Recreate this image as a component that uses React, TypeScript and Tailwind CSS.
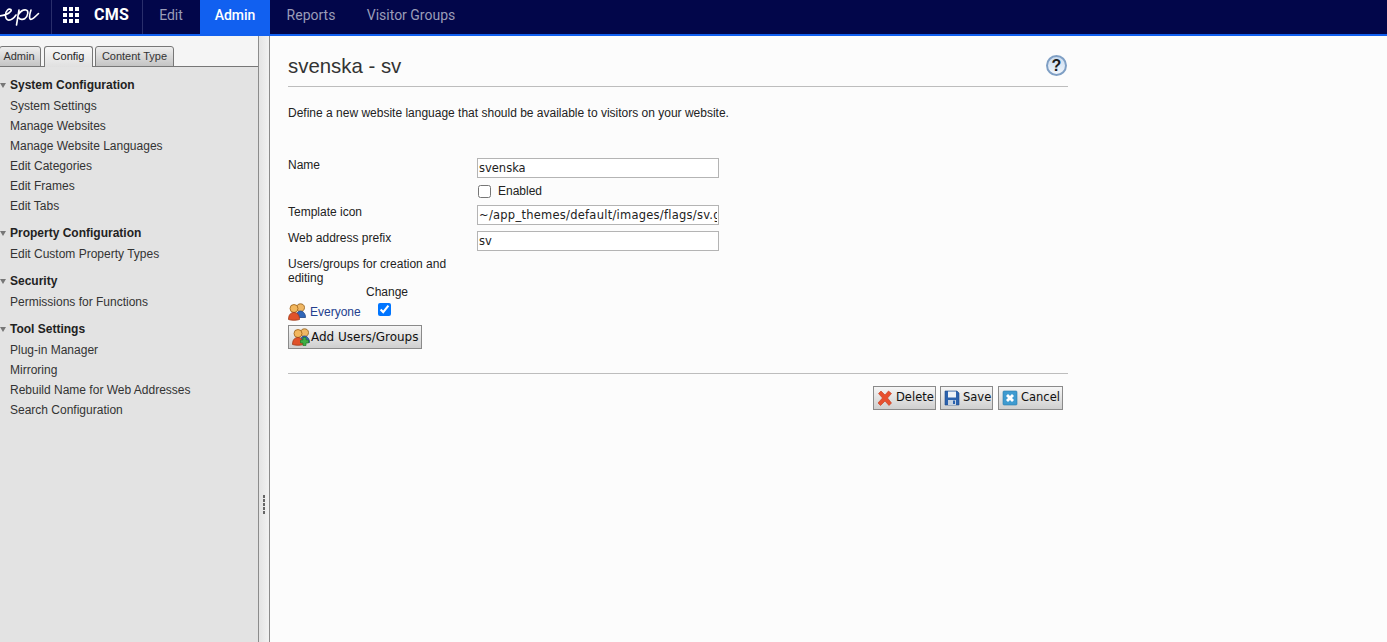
const arial = 'font-["Liberation_Sans",Arial,sans-serif]';

function EpiLogo() {
  return (
    <svg width="42" height="34" viewBox="0 0 42 34" fill="none" stroke="white" strokeWidth="1.6" strokeLinecap="round" strokeLinejoin="round">
      <path d="M-2 16C3 16 9 14 11 11C12 9 9 8.500 7.500 10C4.500 13 5 19 8 20C11 20.500 14 18 16 15" />
      <path d="M19 10L16.500 25M18 15C20 12 23 9.500 26 10C29 10.500 28 16 25 18.500C23 20 20 19.500 19 18" />
      <path d="M31 10C30 13 29 17 30 19C31.500 20.500 35 17 38.500 13.500" />
    </svg>
  );
}

function Grid() {
  return (
    <div className="grid grid-cols-3 gap-[2px] w-[16px] h-[16px]">
      {Array.from({ length: 9 }).map((_, i) => (
        <div key={i} className="bg-white w-[4px] h-[4px]" />
      ))}
    </div>
  );
}

function UsersIcon({ plus }: { plus?: boolean }) {
  return (
    <svg width="18" height="18" viewBox="0 0 18 18">
      <path d="M8.500 4.500C8.500 2 10.500.8 12.500.8s4 1.200 4 3.700-1.800 4.200-4 4.200-4-1.700-4-4.200z" fill="#efb765" stroke="#8f5c16" strokeWidth="0.8" />
      <path d="M8 14.500c0-4 2-6.500 4.500-6.500s5 2.500 5 6.500z" fill="#2f66b8" stroke="#1f4585" strokeWidth="0.8" />
      <circle cx="6" cy="5.500" r="4" fill="#f2b75e" stroke="#9a5f16" strokeWidth="0.8" />
      <path d="M.5 16.500c0-5 2.500-7 5.500-7s5.500 2 5.500 7c-3 1-8 1-11 0z" fill="#e0522a" stroke="#a03a18" strokeWidth="0.8" />
      {plus && <path d="M11 9.500h3v2.500h2.500v3H14v2.500h-3V15H8.500v-3H11z" fill="#3fae45" stroke="#1f7a28" strokeWidth="0.7" />}
    </svg>
  );
}

function DeleteIcon() {
  return (
    <svg width="16" height="16" viewBox="0 0 16 16">
      <path d="M1.500 3.500L4 1l4 4 3.500-4L14.500 3.500 10.500 8l4 5-2.500 2.500-4-4.500-4.500 4.500L1 13l4.500-5z" fill="#e8502f" stroke="#c23a1c" strokeWidth="0.6" />
    </svg>
  );
}

function SaveIcon() {
  return (
    <svg width="16" height="16" viewBox="0 0 16 16">
      <path d="M1 1h12l2 2v12H1z" fill="#2c62ad" stroke="#1f4a8a" strokeWidth="0.6" />
      <rect x="4" y="1.500" width="8" height="6" fill="#eef2f7" />
      <rect x="4" y="10" width="8" height="5" fill="#c8d3e0" />
      <rect x="9" y="10.500" width="2" height="3.500" fill="#2c62ad" />
    </svg>
  );
}

function CancelIcon() {
  return (
    <svg width="16" height="16" viewBox="0 0 16 16">
      <rect x="1" y="1" width="14" height="14" rx="1" fill="#3f9bd0" stroke="#2a7cab" strokeWidth="0.6" />
      <path d="M4 6l2-2 2 2 2-2 2 2-2 2 2 2-2 2-2-2-2 2-2-2 2-2z" fill="white" />
    </svg>
  );
}

function HelpIcon() {
  return (
    <div className="w-[21px] h-[21px] rounded-full border-2 border-[#7f9fc4] bg-gradient-to-b from-[#c9dbef] to-[#f2f6fb] flex items-center justify-center text-[16px] font-bold text-[#1a1a1a] font-['Liberation_Sans',sans-serif]">
      ?
    </div>
  );
}

function Section({ title, items }: { title: string; items: string[] }) {
  return (
    <div className="mb-[7px]">
      <div className="relative h-[21px] flex items-center pb-[1px] pl-[10px] text-[12px] font-bold text-[#222]">
        <span className="absolute left-0 top-[8px] w-0 h-0 border-l-[3px] border-r-[3px] border-t-[5px] border-l-transparent border-r-transparent border-t-[#777]" />
        {title}
      </div>
      {items.map((item) => (
        <div key={item} className="h-[20px] flex items-center pl-[10px] text-[12px] text-[#333]">
          {item}
        </div>
      ))}
    </div>
  );
}

function ActionButton({ icon, label, className }: { icon: React.ReactNode; label: string; className: string }) {
  return (
    <button type="button" className={`h-[24px] flex items-center pl-[3px] border border-[#8a8a8a] bg-gradient-to-b from-[#f6f6f6] to-[#cfcfcf] text-[#111] font-['DejaVu_Sans',sans-serif] ${className}`}>
      {icon}
      {label}
    </button>
  );
}

function Row({ label, children, className }: { label: string; children?: React.ReactNode; className: string }) {
  return (
    <div className={`flex ${className}`}>
      <div className="w-[189px] shrink-0 text-[12px] leading-[14px] text-[#222]">{label}</div>
      {children}
    </div>
  );
}

const inputCls = "w-[242px] h-[20px] border border-[#b4b4b4] bg-white px-[1px] text-[11.500px] text-[#222] font-['DejaVu_Sans',sans-serif] outline-none";
const navCls = "flex items-center justify-center pb-[3px] text-[14px] font-['Roboto',sans-serif]";

export default function App() {
  return (
    <div className={`h-[642px] w-[1387px] overflow-hidden flex flex-col bg-[#fcfcfc] ${arial}`}>
      <header className="h-[36px] shrink-0 bg-[#02064a] border-b-2 border-[#1160f0] flex">
        <div className="w-[52px] border-r border-[#2a2e6b] overflow-hidden">
          <EpiLogo />
        </div>
        <div className="w-[91px] border-r border-[#2a2e6b] flex items-center pb-[4px] pl-[11px] gap-[15px]">
          <Grid />
          <span className="text-[16px] font-bold text-white font-['Roboto',sans-serif] tracking-[0.3px]">CMS</span>
        </div>
        <div className={`w-[56px] text-[#9a9cb8] ${navCls}`}>Edit</div>
        <div className={`w-[70px] ml-[1px] font-medium text-white bg-[#1160f0] ${navCls}`}>Admin</div>
        <div className={`w-[80px] ml-[1px] text-[#9a9cb8] ${navCls}`}>Reports</div>
        <div className={`ml-[2px] w-[116px] text-[#9a9cb8] text-[13.800px] ${navCls}`}>Visitor Groups</div>
      </header>
      <div className="flex flex-1 min-h-0">
        <aside className="w-[258px] shrink-0 bg-[#e3e3e3] flex flex-col">
          <div className="h-[31px] shrink-0 bg-[#f5f5f5] border-b border-[#777] flex items-end">
            <div className="w-[42px] h-[21px] -mb-[1px] ml-[-1px] pb-[1px] pr-[2px] border border-[#777] rounded-t-[3px] bg-gradient-to-b from-[#eee] to-[#c4c4c4] flex items-center justify-center text-[11px] text-[#333]">Admin</div>
            <div className="w-[49px] h-[21px] ml-[3px] -mb-[1px] pb-[1px] border border-b-0 border-[#777] rounded-t-[3px] bg-gradient-to-b from-[#f8f8f8] to-[#e0e0e0] flex items-center justify-center text-[11px] text-[#222]">Config</div>
            <div className="w-[79px] h-[21px] ml-[2px] -mb-[1px] pb-[1px] border border-[#777] rounded-t-[3px] bg-gradient-to-b from-[#eee] to-[#c4c4c4] flex items-center justify-center text-[11px] text-[#333]">Content Type</div>
          </div>
          <nav className="pt-[8px]">
            <Section title="System Configuration" items={["System Settings", "Manage Websites", "Manage Website Languages", "Edit Categories", "Edit Frames", "Edit Tabs"]} />
            <Section title="Property Configuration" items={["Edit Custom Property Types"]} />
            <Section title="Security" items={["Permissions for Functions"]} />
            <Section title="Tool Settings" items={["Plug-in Manager", "Mirroring", "Rebuild Name for Web Addresses", "Search Configuration"]} />
          </nav>
        </aside>
        <div className="w-[12px] shrink-0 border-x border-[#8c8c8c] bg-gradient-to-r from-[#e4e4e4] to-[#f2f2f2] flex flex-col items-center gap-[1px] pt-[459px]">
          {Array.from({ length: 5 }).map((_, i) => (
            <div key={i} className="w-[2px] h-[3px] bg-[#666]" />
          ))}
        </div>
        <main className="flex-1 pl-[18px] pt-[16px]">
          <div className="w-[780px]">
            <div className="h-[35px] border-b border-[#bdbdbd] flex items-start justify-between">
              <h1 className="text-[20.400px] leading-[28px] text-[#333]">svenska - sv</h1>
              <div className="pt-[3px] pr-[1px]"><HelpIcon /></div>
            </div>
            <p className="mt-[19px] text-[12px] leading-[14px] text-[#222]">Define a new website language that should be available to visitors on your website.</p>
            <Row label="Name" className="mt-[38px]">
              <input readOnly value="svenska" className={inputCls} />
            </Row>
            <div className="pl-[190px] mt-[5px] h-[16px] flex items-center gap-[7px] text-[12px] text-[#222]">
              <input type="checkbox" readOnly className="w-[13px] h-[13px] m-0" />
              Enabled
            </div>
            <Row label="Template icon" className="mt-[6px]">
              <input readOnly value="~/app_themes/default/images/flags/sv.gif" className={`${inputCls} tracking-[0.25px]`} />
            </Row>
            <Row label="Web address prefix" className="mt-[6px]">
              <input readOnly value="sv" className={inputCls} />
            </Row>
            <div className="mt-[6px] w-[170px] text-[12px] leading-[14px] text-[#222]">Users/groups for creation and editing</div>
            <div className="pl-[78px] text-[12px] leading-[14px] text-[#222]">Change</div>
            <div className="mt-[3px] flex items-center h-[20px]">
              <UsersIcon />
              <span className="ml-[4px] w-[68px] text-[12px] text-[#24408e]">Everyone</span>
              <input type="checkbox" readOnly checked className="w-[13px] h-[13px] m-0 -mt-[5px] accent-[#0075ff]" />
            </div>
            <div className="mt-[3px]">
              <ActionButton icon={<UsersIcon plus />} label="Add Users/Groups" className="w-[134px] gap-[1px] text-[12px]" />
            </div>
            <div className="mt-[24px] border-t border-[#bdbdbd] pt-[12px] pr-[5px] flex justify-end gap-[4px]">
              <ActionButton icon={<DeleteIcon />} label="Delete" className="w-[63px] gap-[3px] text-[11.500px]" />
              <ActionButton icon={<SaveIcon />} label="Save" className="w-[53px] gap-[3px] text-[11.500px]" />
              <ActionButton icon={<CancelIcon />} label="Cancel" className="w-[65px] ml-[1px] gap-[3px] text-[11.500px]" />
            </div>
          </div>
        </main>
      </div>
    </div>
  );
}
